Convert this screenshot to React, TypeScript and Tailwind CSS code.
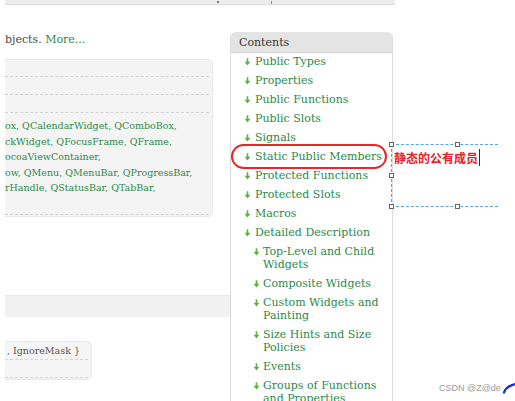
import React from "react";

const Arrow = ({ cls = "" }: { cls?: string }) => (
  <svg width="7" height="8" viewBox="0 0 7 8" className={"shrink-0 " + cls}>
    <path d="M3.5 0.3V5" stroke="#5fae3e" strokeWidth="1.6" />
    <path d="M0.6 3.8 L6.4 3.8 L3.5 7.6 Z" fill="#5fae3e" />
  </svg>
);

const Item = ({ children, nested = false }: { children: React.ReactNode; nested?: boolean }) => (
  <div className={"flex items-start " + (nested ? "pl-[22px]" : "pl-[13px]")}>
    <Arrow cls="mt-[3px]" />
    <span className={"leading-[13px] whitespace-nowrap text-[#2a8a4a] " + (nested ? "ml-[3px]" : "ml-[4px]")}>{children}</span>
  </div>
);

export default function App() {
  return (
    <div className="relative w-[515px] h-[401px] overflow-hidden bg-white font-['DejaVu_Serif',serif] text-[11px]">
      {/* top bar */}
      <div className="relative ml-[5px] w-[390px] h-[5px] bg-[#ececec] border-b border-[#dcdcdc]">
        <span className="absolute left-[212px] top-[1px] w-[2px] h-[2px] bg-[#777]" />
        <span className="absolute left-[266px] top-[1px] w-[1px] h-[3px] bg-[#888]" />
      </div>

      <div className="flex items-start">
        {/* left column */}
        <div className="ml-[5px] w-[225px] overflow-hidden text-[#4a4a4a]">
          <div className="mt-[27px] h-[16px] leading-[16px] whitespace-nowrap">
            bjects. <span className="text-[#2a8a4a]">More...</span>
          </div>
          <div className="mt-[11px] w-[208px] h-[158px] bg-[#f4f4f4] border-t border-r border-b border-[#e8e8e8] rounded-r-[5px]">
            <div className="mr-[3px] h-[17px] border-b border-dashed border-[#d4d4d4]" />
            <div className="mr-[3px] h-[18px] border-b border-dashed border-[#d4d4d4]" />
            <div className="mr-[3px] h-[18px] border-b border-dashed border-[#d4d4d4]" />
            <div className="mr-[3px] h-[102px] pt-[5px] border-b border-dashed border-[#d4d4d4] text-[9.5px] leading-[15.5px] text-[#2a8a4a] whitespace-nowrap">
              <div>ox, QCalendarWidget, QComboBox,</div>
              <div>ckWidget, QFocusFrame, QFrame,</div>
              <div>ocoaViewContainer,</div>
              <div>ow, QMenu, QMenuBar, QProgressBar,</div>
              <div>rHandle, QStatusBar, QTabBar,</div>
            </div>
          </div>
          <div className="mt-[78px] h-[22px] bg-[#f1f1f2] border-t border-[#e8e8e8]" />
          <div className="mt-[24px] w-[87px] h-[39px] bg-[#f5f5f5] border-t border-r border-b border-[#e8e8e8] rounded-r-[5px] text-[9.5px] text-[#555]">
            <div className="mr-[3px] h-[18px] leading-[18px] pl-[2px] border-b border-dashed border-[#d4d4d4] whitespace-nowrap">{", IgnoreMask }"}</div>
            <div className="mr-[3px] h-[18px] border-b border-dashed border-[#d4d4d4]" />
          </div>
        </div>

        {/* contents panel */}
        <div className="mt-[27px] w-[163px] h-[400px] border-l border-r border-[#dcdcdc] rounded-t-[6px] overflow-hidden">
          <div className="h-[21px] bg-[#e4e4e4] border-b border-[#d6d6d6] pl-[8px] leading-[21px] text-[#363636]">
            Contents
          </div>
          <div className="flex flex-col gap-[6px] pt-[2px] bg-white">
            <Item>Public Types</Item>
            <Item>Properties</Item>
            <Item>Public Functions</Item>
            <Item>Public Slots</Item>
            <Item>Signals</Item>
            <Item>Static Public Members</Item>
            <Item>Protected Functions</Item>
            <Item>Protected Slots</Item>
            <Item>Macros</Item>
            <Item>Detailed Description</Item>
            <Item nested>Top-Level and Child<br />Widgets</Item>
            <Item nested>Composite Widgets</Item>
            <Item nested>Custom Widgets and<br />Painting</Item>
            <Item nested>Size Hints and Size<br />Policies</Item>
            <Item nested>Events</Item>
            <Item nested>Groups of Functions<br />and Properties</Item>
          </div>
        </div>
      </div>

      {/* red annotation ellipse */}
      <div className="absolute left-[231px] top-[144px] w-[156px] h-[25px] border-2 border-[#e8262b] rounded-[13px]" />

      {/* dashed text box */}
      <div className="absolute left-[391px] top-[144px] w-[107px] h-[63px] border-t border-b border-l border-dashed border-[#5aa5e6]" />
      {[
        [389, 142],
        [455, 142],
        [389, 173],
        [389, 204],
        [455, 204],
      ].map(([x, y], i) => (
        <span
          key={i}
          className="absolute w-[5px] h-[5px] bg-white border border-[#666]"
          style={{ left: x, top: y }}
        />
      ))}
      <div className="absolute left-[394px] top-[149px] h-[17px] flex items-center font-['Noto_Sans_CJK_SC',sans-serif] font-bold text-[12px] leading-[17px] text-[#e8212a]">
        静态的公有成员
        <span className="ml-[1px] w-[1px] h-[17px] bg-[#333]" />
      </div>

      {/* watermark */}
      <div className="absolute left-[439px] top-[381px] font-['Liberation_Sans',sans-serif] text-[9px] leading-[14px] text-[#9a9a9a] whitespace-nowrap">
        CSDN @Z@de
      </div>
      <svg className="absolute left-[502px] top-[380px]" width="13" height="14" viewBox="0 0 13 14">
        <path d="M2 12.5 C3.5 8.5 6.5 5.5 13 4" stroke="#1326e0" strokeWidth="2.2" fill="none" strokeLinecap="round" />
      </svg>
    </div>
  );
}
